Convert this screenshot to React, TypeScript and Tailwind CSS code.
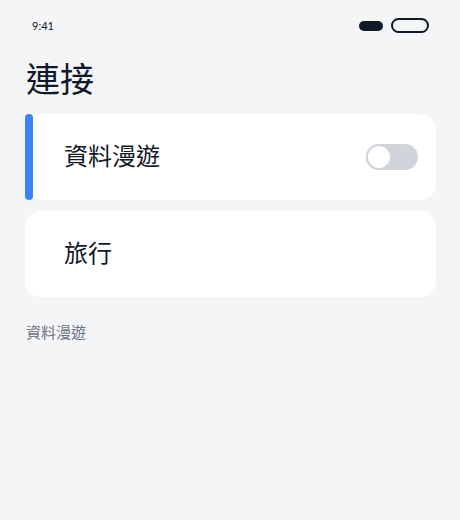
import React from "react";

const cjk = { fontFamily: '"Noto Sans CJK TC", "Noto Sans", sans-serif' };

const Toggle = () => (
  <div className="relative mt-1 h-[26px] w-[52px] rounded-full bg-[#d1d5db]">
    <div className="absolute left-0 top-0 h-[26px] w-[26px] rounded-full border-2 border-[#d1d5db] bg-white" />
  </div>
);

export default function App() {
  return (
    <div className="min-h-[520px] w-[460px] bg-[#f4f5f7] px-6 pt-[18px]" style={cjk}>
      {/* status bar */}
      <div className="flex h-[15px] items-center justify-between pl-2 pr-[7px]">
        <span className="text-[11px] leading-none text-[#111827]" style={{ fontFamily: "Lato, sans-serif" }}>
          9:41
        </span>
        <div className="flex items-center gap-2">
          <div className="h-[10px] w-6 rounded-full bg-[#111827]" />
          <div className="h-[15px] w-[38px] rounded-full border-2 border-[#111827]" />
        </div>
      </div>

      <h1 className="mt-[28px] pl-0.5 text-[34px] leading-none font-normal text-[#111827]">連接</h1>

      <div className="mt-[19px] flex flex-col gap-[11px] pl-px">
        <div className="relative flex h-[86px] items-center justify-between rounded-2xl bg-white pb-1 pl-[39px] pr-[18px]">
          <div className="absolute left-0 top-0 h-full w-2 rounded-full bg-[#3b82f6]" />
          <span className="text-2xl font-normal text-[#111827]">資料漫遊</span>
          <Toggle />
        </div>
        <div className="flex h-[86px] items-center rounded-2xl bg-white pb-1 pl-[39px]">
          <span className="text-2xl font-normal text-[#111827]">旅行</span>
        </div>
      </div>

      <p className="mt-6 pl-0.5 text-[15px] text-[#6b7280]">資料漫遊</p>
    </div>
  );
}
